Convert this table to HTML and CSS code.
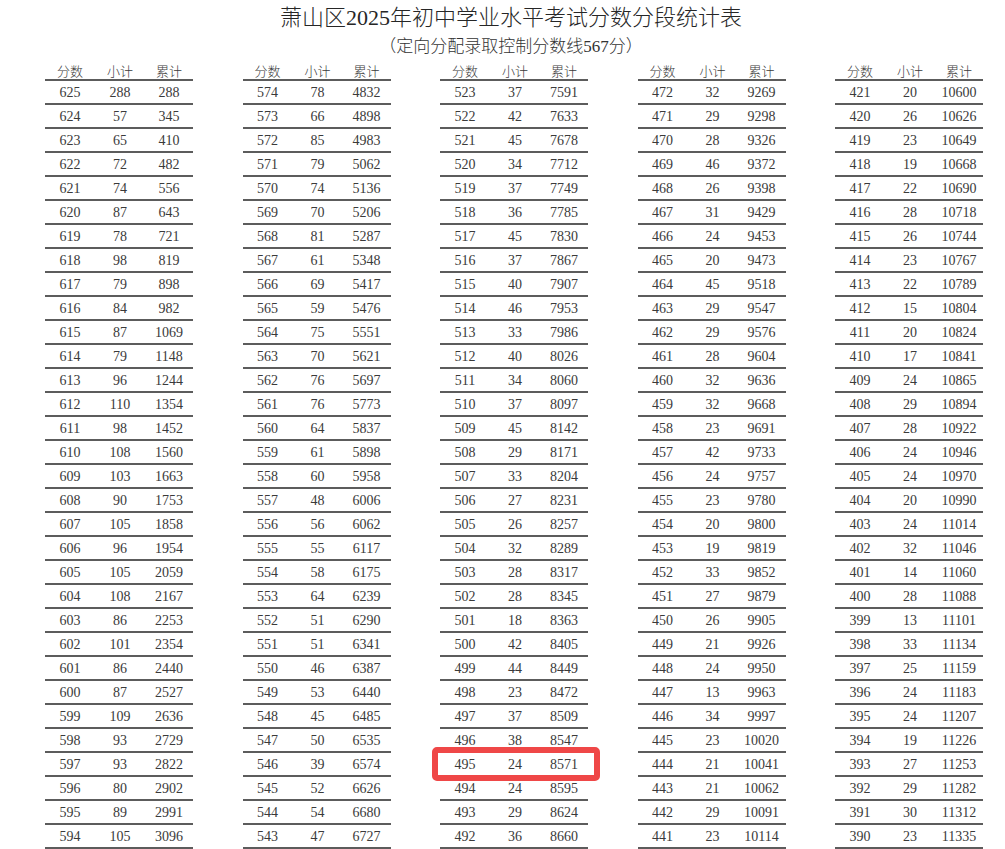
FILE: index.html
```html
<!DOCTYPE html>
<html lang="zh-CN">
<head>
<meta charset="utf-8">
<title>萧山区2025年初中学业水平考试分数分段统计表</title>
<link rel="stylesheet" href="styles.css">
</head>
<body>
<div class="page">
  <header class="head">
    <h1 class="title">萧山区2025年初中学业水平考试分数分段统计表</h1>
    <p class="subtitle">（定向分配录取控制分数线567分）</p>
  </header>
  <main class="tables">
    <div class="tbl">
      <div class="row hd"><span>分数</span><span>小计</span><span>累计</span></div>
      <div class="row"><span>625</span><span>288</span><span>288</span></div>
      <div class="row"><span>624</span><span>57</span><span>345</span></div>
      <div class="row"><span>623</span><span>65</span><span>410</span></div>
      <div class="row"><span>622</span><span>72</span><span>482</span></div>
      <div class="row"><span>621</span><span>74</span><span>556</span></div>
      <div class="row"><span>620</span><span>87</span><span>643</span></div>
      <div class="row"><span>619</span><span>78</span><span>721</span></div>
      <div class="row"><span>618</span><span>98</span><span>819</span></div>
      <div class="row"><span>617</span><span>79</span><span>898</span></div>
      <div class="row"><span>616</span><span>84</span><span>982</span></div>
      <div class="row"><span>615</span><span>87</span><span>1069</span></div>
      <div class="row"><span>614</span><span>79</span><span>1148</span></div>
      <div class="row"><span>613</span><span>96</span><span>1244</span></div>
      <div class="row"><span>612</span><span>110</span><span>1354</span></div>
      <div class="row"><span>611</span><span>98</span><span>1452</span></div>
      <div class="row"><span>610</span><span>108</span><span>1560</span></div>
      <div class="row"><span>609</span><span>103</span><span>1663</span></div>
      <div class="row"><span>608</span><span>90</span><span>1753</span></div>
      <div class="row"><span>607</span><span>105</span><span>1858</span></div>
      <div class="row"><span>606</span><span>96</span><span>1954</span></div>
      <div class="row"><span>605</span><span>105</span><span>2059</span></div>
      <div class="row"><span>604</span><span>108</span><span>2167</span></div>
      <div class="row"><span>603</span><span>86</span><span>2253</span></div>
      <div class="row"><span>602</span><span>101</span><span>2354</span></div>
      <div class="row"><span>601</span><span>86</span><span>2440</span></div>
      <div class="row"><span>600</span><span>87</span><span>2527</span></div>
      <div class="row"><span>599</span><span>109</span><span>2636</span></div>
      <div class="row"><span>598</span><span>93</span><span>2729</span></div>
      <div class="row"><span>597</span><span>93</span><span>2822</span></div>
      <div class="row"><span>596</span><span>80</span><span>2902</span></div>
      <div class="row"><span>595</span><span>89</span><span>2991</span></div>
      <div class="row"><span>594</span><span>105</span><span>3096</span></div>
    </div>
    <div class="tbl">
      <div class="row hd"><span>分数</span><span>小计</span><span>累计</span></div>
      <div class="row"><span>574</span><span>78</span><span>4832</span></div>
      <div class="row"><span>573</span><span>66</span><span>4898</span></div>
      <div class="row"><span>572</span><span>85</span><span>4983</span></div>
      <div class="row"><span>571</span><span>79</span><span>5062</span></div>
      <div class="row"><span>570</span><span>74</span><span>5136</span></div>
      <div class="row"><span>569</span><span>70</span><span>5206</span></div>
      <div class="row"><span>568</span><span>81</span><span>5287</span></div>
      <div class="row"><span>567</span><span>61</span><span>5348</span></div>
      <div class="row"><span>566</span><span>69</span><span>5417</span></div>
      <div class="row"><span>565</span><span>59</span><span>5476</span></div>
      <div class="row"><span>564</span><span>75</span><span>5551</span></div>
      <div class="row"><span>563</span><span>70</span><span>5621</span></div>
      <div class="row"><span>562</span><span>76</span><span>5697</span></div>
      <div class="row"><span>561</span><span>76</span><span>5773</span></div>
      <div class="row"><span>560</span><span>64</span><span>5837</span></div>
      <div class="row"><span>559</span><span>61</span><span>5898</span></div>
      <div class="row"><span>558</span><span>60</span><span>5958</span></div>
      <div class="row"><span>557</span><span>48</span><span>6006</span></div>
      <div class="row"><span>556</span><span>56</span><span>6062</span></div>
      <div class="row"><span>555</span><span>55</span><span>6117</span></div>
      <div class="row"><span>554</span><span>58</span><span>6175</span></div>
      <div class="row"><span>553</span><span>64</span><span>6239</span></div>
      <div class="row"><span>552</span><span>51</span><span>6290</span></div>
      <div class="row"><span>551</span><span>51</span><span>6341</span></div>
      <div class="row"><span>550</span><span>46</span><span>6387</span></div>
      <div class="row"><span>549</span><span>53</span><span>6440</span></div>
      <div class="row"><span>548</span><span>45</span><span>6485</span></div>
      <div class="row"><span>547</span><span>50</span><span>6535</span></div>
      <div class="row"><span>546</span><span>39</span><span>6574</span></div>
      <div class="row"><span>545</span><span>52</span><span>6626</span></div>
      <div class="row"><span>544</span><span>54</span><span>6680</span></div>
      <div class="row"><span>543</span><span>47</span><span>6727</span></div>
    </div>
    <div class="tbl">
      <div class="row hd"><span>分数</span><span>小计</span><span>累计</span></div>
      <div class="row"><span>523</span><span>37</span><span>7591</span></div>
      <div class="row"><span>522</span><span>42</span><span>7633</span></div>
      <div class="row"><span>521</span><span>45</span><span>7678</span></div>
      <div class="row"><span>520</span><span>34</span><span>7712</span></div>
      <div class="row"><span>519</span><span>37</span><span>7749</span></div>
      <div class="row"><span>518</span><span>36</span><span>7785</span></div>
      <div class="row"><span>517</span><span>45</span><span>7830</span></div>
      <div class="row"><span>516</span><span>37</span><span>7867</span></div>
      <div class="row"><span>515</span><span>40</span><span>7907</span></div>
      <div class="row"><span>514</span><span>46</span><span>7953</span></div>
      <div class="row"><span>513</span><span>33</span><span>7986</span></div>
      <div class="row"><span>512</span><span>40</span><span>8026</span></div>
      <div class="row"><span>511</span><span>34</span><span>8060</span></div>
      <div class="row"><span>510</span><span>37</span><span>8097</span></div>
      <div class="row"><span>509</span><span>45</span><span>8142</span></div>
      <div class="row"><span>508</span><span>29</span><span>8171</span></div>
      <div class="row"><span>507</span><span>33</span><span>8204</span></div>
      <div class="row"><span>506</span><span>27</span><span>8231</span></div>
      <div class="row"><span>505</span><span>26</span><span>8257</span></div>
      <div class="row"><span>504</span><span>32</span><span>8289</span></div>
      <div class="row"><span>503</span><span>28</span><span>8317</span></div>
      <div class="row"><span>502</span><span>28</span><span>8345</span></div>
      <div class="row"><span>501</span><span>18</span><span>8363</span></div>
      <div class="row"><span>500</span><span>42</span><span>8405</span></div>
      <div class="row"><span>499</span><span>44</span><span>8449</span></div>
      <div class="row"><span>498</span><span>23</span><span>8472</span></div>
      <div class="row"><span>497</span><span>37</span><span>8509</span></div>
      <div class="row"><span>496</span><span>38</span><span>8547</span></div>
      <div class="row"><span>495</span><span>24</span><span>8571</span></div>
      <div class="row"><span>494</span><span>24</span><span>8595</span></div>
      <div class="row"><span>493</span><span>29</span><span>8624</span></div>
      <div class="row"><span>492</span><span>36</span><span>8660</span></div>
    </div>
    <div class="tbl">
      <div class="row hd"><span>分数</span><span>小计</span><span>累计</span></div>
      <div class="row"><span>472</span><span>32</span><span>9269</span></div>
      <div class="row"><span>471</span><span>29</span><span>9298</span></div>
      <div class="row"><span>470</span><span>28</span><span>9326</span></div>
      <div class="row"><span>469</span><span>46</span><span>9372</span></div>
      <div class="row"><span>468</span><span>26</span><span>9398</span></div>
      <div class="row"><span>467</span><span>31</span><span>9429</span></div>
      <div class="row"><span>466</span><span>24</span><span>9453</span></div>
      <div class="row"><span>465</span><span>20</span><span>9473</span></div>
      <div class="row"><span>464</span><span>45</span><span>9518</span></div>
      <div class="row"><span>463</span><span>29</span><span>9547</span></div>
      <div class="row"><span>462</span><span>29</span><span>9576</span></div>
      <div class="row"><span>461</span><span>28</span><span>9604</span></div>
      <div class="row"><span>460</span><span>32</span><span>9636</span></div>
      <div class="row"><span>459</span><span>32</span><span>9668</span></div>
      <div class="row"><span>458</span><span>23</span><span>9691</span></div>
      <div class="row"><span>457</span><span>42</span><span>9733</span></div>
      <div class="row"><span>456</span><span>24</span><span>9757</span></div>
      <div class="row"><span>455</span><span>23</span><span>9780</span></div>
      <div class="row"><span>454</span><span>20</span><span>9800</span></div>
      <div class="row"><span>453</span><span>19</span><span>9819</span></div>
      <div class="row"><span>452</span><span>33</span><span>9852</span></div>
      <div class="row"><span>451</span><span>27</span><span>9879</span></div>
      <div class="row"><span>450</span><span>26</span><span>9905</span></div>
      <div class="row"><span>449</span><span>21</span><span>9926</span></div>
      <div class="row"><span>448</span><span>24</span><span>9950</span></div>
      <div class="row"><span>447</span><span>13</span><span>9963</span></div>
      <div class="row"><span>446</span><span>34</span><span>9997</span></div>
      <div class="row"><span>445</span><span>23</span><span>10020</span></div>
      <div class="row"><span>444</span><span>21</span><span>10041</span></div>
      <div class="row"><span>443</span><span>21</span><span>10062</span></div>
      <div class="row"><span>442</span><span>29</span><span>10091</span></div>
      <div class="row"><span>441</span><span>23</span><span>10114</span></div>
    </div>
    <div class="tbl">
      <div class="row hd"><span>分数</span><span>小计</span><span>累计</span></div>
      <div class="row"><span>421</span><span>20</span><span>10600</span></div>
      <div class="row"><span>420</span><span>26</span><span>10626</span></div>
      <div class="row"><span>419</span><span>23</span><span>10649</span></div>
      <div class="row"><span>418</span><span>19</span><span>10668</span></div>
      <div class="row"><span>417</span><span>22</span><span>10690</span></div>
      <div class="row"><span>416</span><span>28</span><span>10718</span></div>
      <div class="row"><span>415</span><span>26</span><span>10744</span></div>
      <div class="row"><span>414</span><span>23</span><span>10767</span></div>
      <div class="row"><span>413</span><span>22</span><span>10789</span></div>
      <div class="row"><span>412</span><span>15</span><span>10804</span></div>
      <div class="row"><span>411</span><span>20</span><span>10824</span></div>
      <div class="row"><span>410</span><span>17</span><span>10841</span></div>
      <div class="row"><span>409</span><span>24</span><span>10865</span></div>
      <div class="row"><span>408</span><span>29</span><span>10894</span></div>
      <div class="row"><span>407</span><span>28</span><span>10922</span></div>
      <div class="row"><span>406</span><span>24</span><span>10946</span></div>
      <div class="row"><span>405</span><span>24</span><span>10970</span></div>
      <div class="row"><span>404</span><span>20</span><span>10990</span></div>
      <div class="row"><span>403</span><span>24</span><span>11014</span></div>
      <div class="row"><span>402</span><span>32</span><span>11046</span></div>
      <div class="row"><span>401</span><span>14</span><span>11060</span></div>
      <div class="row"><span>400</span><span>28</span><span>11088</span></div>
      <div class="row"><span>399</span><span>13</span><span>11101</span></div>
      <div class="row"><span>398</span><span>33</span><span>11134</span></div>
      <div class="row"><span>397</span><span>25</span><span>11159</span></div>
      <div class="row"><span>396</span><span>24</span><span>11183</span></div>
      <div class="row"><span>395</span><span>24</span><span>11207</span></div>
      <div class="row"><span>394</span><span>19</span><span>11226</span></div>
      <div class="row"><span>393</span><span>27</span><span>11253</span></div>
      <div class="row"><span>392</span><span>29</span><span>11282</span></div>
      <div class="row"><span>391</span><span>30</span><span>11312</span></div>
      <div class="row"><span>390</span><span>23</span><span>11335</span></div>
    </div>
  </main>
  <div class="mark"></div>
</div>
</body>
</html>
```
FILE: styles.css
```css
html, body {
  margin: 0;
  padding: 0;
  background: #ffffff;
}

.page {
  position: relative;
  width: 1005px;
  height: 849px;
  overflow: hidden;
  background: #ffffff;
  color: #3a3a3a;
  font-family: "Liberation Serif", "Noto Sans CJK SC", serif;
}

.head {
  height: 58px;
  padding-left: 17px;
  box-sizing: border-box;
  text-align: center;
}

.title {
  margin: 0;
  padding-top: 4px;
  font-size: 22px;
  line-height: 28px;
  font-weight: 300;
  color: #262626;
}

.subtitle {
  margin: 4px 0 0;
  font-size: 17px;
  line-height: 22px;
  font-weight: 300;
  color: #333333;
}

.tables {
  display: grid;
  grid-template-columns: repeat(5, 148px);
  column-gap: 49.5px;
  padding-left: 45px;
}

.tbl {
  display: flex;
  flex-direction: column;
}

.row {
  display: grid;
  grid-template-columns: 50px 50px 48px;
  height: 24px;
  box-sizing: border-box;
  padding-top: 1px;
  border-bottom: 2px solid #5c5c5c;
  font-size: 14px;
  line-height: 21px;
  text-align: center;
}

.row.hd {
  height: 23px;
  padding-top: 7px;
  font-size: 13px;
  font-weight: 300;
  line-height: 14px;
}

.mark {
  position: absolute;
  left: 432px;
  top: 747px;
  width: 168px;
  height: 34px;
  box-sizing: border-box;
  border: 6px solid #ef4747;
  border-radius: 5px;
}
```
